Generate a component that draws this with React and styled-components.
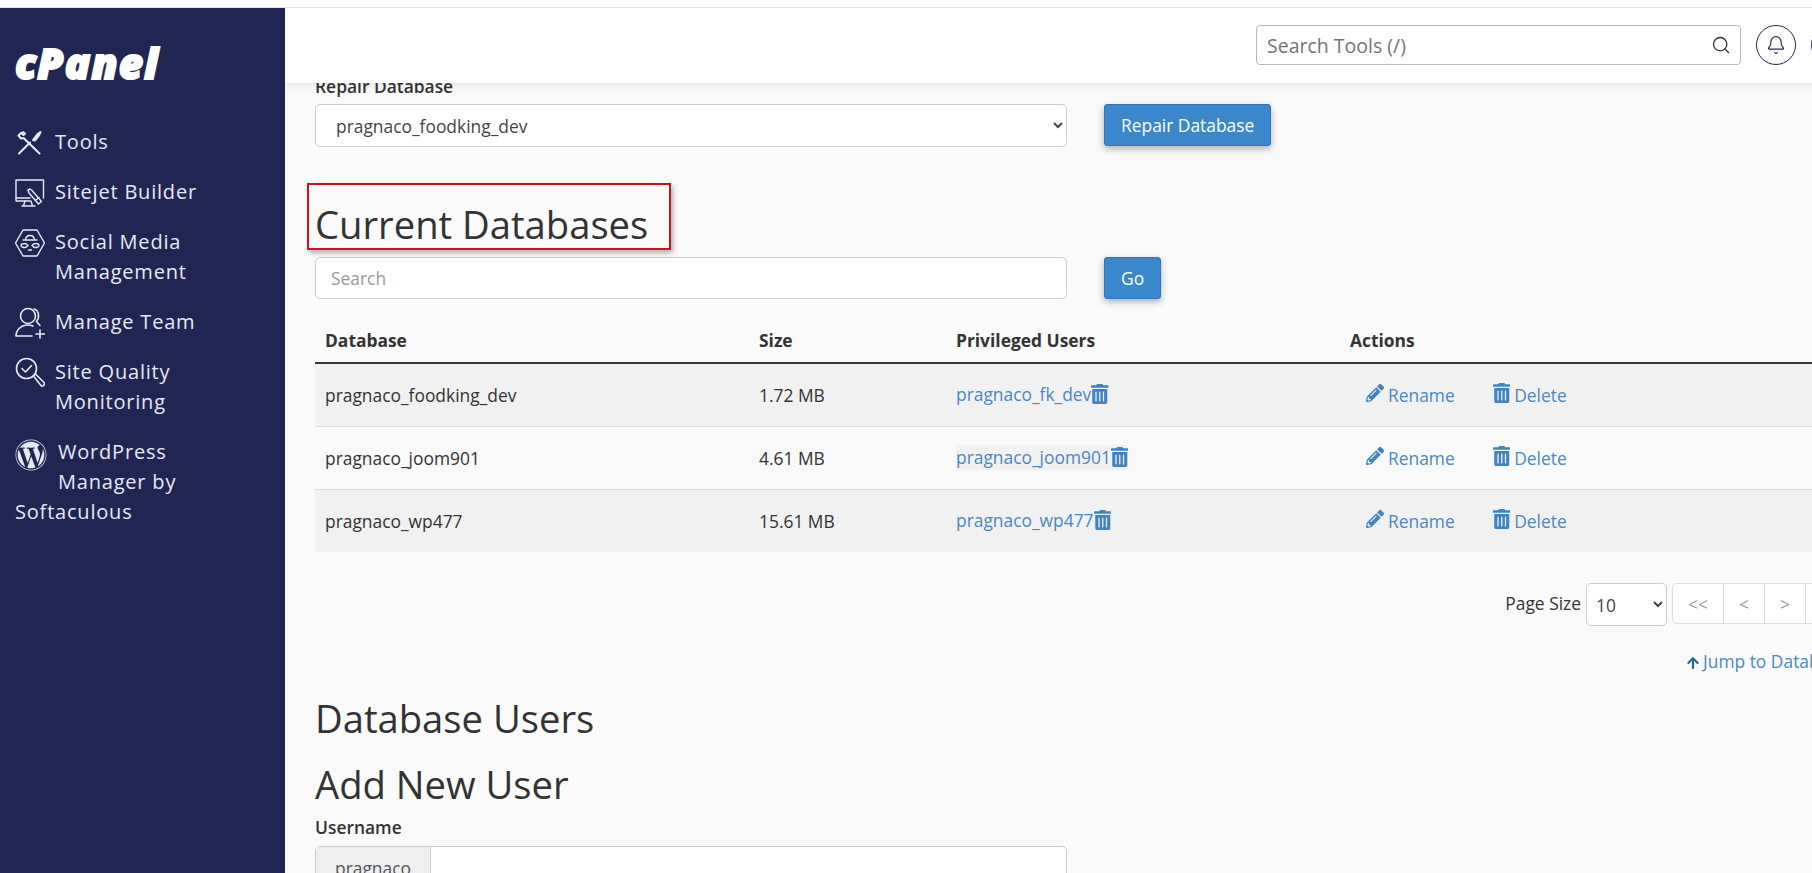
import React from 'react';
import styled, { createGlobalStyle } from 'styled-components';
import { Bell, Search } from 'lucide-react';
import { FaArrowUp, FaPencilAlt, FaTrashAlt, FaWordpress } from 'react-icons/fa';

const Global = createGlobalStyle`
  html, body { margin: 0; padding: 0; height: 100%; overflow: hidden; }
  body { font-family: "Open Sans", "Liberation Sans", sans-serif; color: #333; background: #fff; }
  * { box-sizing: border-box; }
`;

const Page = styled.div`
  height: 873px;
  display: flex;
  flex-direction: column;
  overflow: hidden;
`;

const TopStrip = styled.div`
  height: 8px;
  flex: none;
  background: #fff;
  border-bottom: 1px solid #e4e4e4;
`;

const Body = styled.div`
  flex: 1;
  min-height: 0;
  display: flex;
`;

const Sidebar = styled.aside`
  width: 285px;
  flex: none;
  padding: 33px 40px 0 15px;
  background: #202651;
  color: #e6e9f4;
`;

const Logo = styled.div`
  height: 86px;
  font-size: 42px;
  line-height: 44px;
  font-weight: 800;
  font-style: italic;
  letter-spacing: 1.2px;
  color: #fff;
  -webkit-text-stroke: 2px #fff;
`;

const Nav = styled.nav`
  display: flex;
  flex-direction: column;
  gap: 20px;
`;

const NavItem = styled.a`
  display: block;
  height: ${(p) => p.$lines * 30}px;
  font-size: 20px;
  line-height: 30px;
  letter-spacing: 0.8px;

  svg {
    float: left;
    width: ${(p) => p.$iconSize || 30}px;
    height: 32px;
    margin-right: ${(p) => p.$gap || 10}px;
    margin-top: ${(p) => p.$top || 0}px;
  }
`;

const Main = styled.div`
  flex: 1;
  min-width: 0;
  display: flex;
  flex-direction: column;
  background: #fafafa;
  overflow: hidden;
`;

const Header = styled.header`
  position: relative;
  z-index: 2;
  height: 75px;
  flex: none;
  display: flex;
  justify-content: flex-end;
  align-items: center;
  gap: 15px;
  margin-right: -39px;
  padding-bottom: 1px;
  background: #fff;
  box-shadow: 0 2px 8px rgba(0, 0, 0, 0.09);
`;

const ToolSearch = styled.div`
  width: 485px;
  height: 40px;
  display: flex;
  align-items: center;
  justify-content: space-between;
  padding: 0 9px 0 10px;
  background: #fff;
  border: 1px solid #b9b9c0;
  border-radius: 4px;
  font-size: 19.5px;
  color: #77736f;
`;

const RoundButton = styled.div`
  width: 40px;
  height: 40px;
  flex: none;
  display: flex;
  align-items: center;
  justify-content: center;
  border: 1px solid #202651;
  border-radius: 50%;
  color: #202651;
`;

const Content = styled.main`
  width: 1610px;
  padding: 0 0 0 30px;
  font-size: 17.4px;
`;

const FieldLabel = styled.label`
  display: block;
  line-height: 22px;
  font-weight: 600;
  margin-top: ${(p) => p.$top || 0}px;
  margin-bottom: ${(p) => p.$bottom || 7}px;
`;

const FormRow = styled.div`
  display: flex;
  gap: 37px;
  align-items: flex-start;
`;

const Select = styled.select`
  width: 752px;
  height: 43px;
  padding: 0 16px;
  background: #fff;
  border: 1px solid #ccc;
  border-radius: 5px;
  font: inherit;
  font-size: 17.4px;
  color: #444;
`;

const TextInput = styled.input`
  width: 752px;
  height: 42px;
  padding: 0 15px;
  background: #fff;
  border: 1px solid #ccc;
  border-radius: 5px;
  font: inherit;
  font-size: 17.4px;

  &::placeholder { color: #999; }
`;

const Button = styled.button`
  height: 42px;
  padding: 0 16px;
  background: #3a87cb;
  border: 1px solid #2f77b6;
  border-radius: 3px;
  box-shadow: 0 3px 7px rgba(0, 0, 0, 0.3);
  font: inherit;
  font-size: 17.4px;
  color: #fff;
`;

const Heading = styled.h2`
  margin: ${(p) => p.$top || 0}px 0 ${(p) => p.$bottom || 0}px;
  font-size: 38.2px;
  line-height: 46px;
  font-weight: 400;
  color: #333;
`;

const Marked = styled.span`
  position: relative;
  display: inline-block;

  &::after {
    content: '';
    position: absolute;
    left: -8px;
    right: -23px;
    top: -18px;
    bottom: -3px;
    border: 2px solid #c8141b;
    box-shadow: 2px 3px 5px rgba(0, 0, 0, 0.3);
  }
`;

const Table = styled.table`
  width: 1580px;
  margin-top: 19px;
  border-collapse: collapse;
  table-layout: fixed;
`;

const HeadCell = styled.th`
  height: 45px;
  padding: 0 10px;
  text-align: left;
  font-weight: 700;
  border-bottom: 2px solid #333;
`;

const Row = styled.tr`
  background: ${(p) => (p.$odd ? '#f1f1f1' : '#f9f9f9')};
  border-bottom: 1px solid #ddd;

  &:last-child { border-bottom: 0; }
`;

const Cell = styled.td`
  height: 63px;
  padding: 0 10px;
`;

const UserCell = styled.span`
  display: inline-block;
  background: ${(p) => (p.$hover ? '#f1f1f1' : 'transparent')};
  line-height: 25px;
`;

const Link = styled.a`
  color: #4b87c1;
`;

const TrashIcon = styled(FaTrashAlt)`
  width: 17.5px;
  height: 20px;
  color: #3f84c1;
  vertical-align: -3px;
`;

const Actions = styled.div`
  display: flex;
  gap: 38px;
  padding-left: 16px;
`;

const Action = styled.a`
  display: flex;
  align-items: center;
  gap: 4px;
  color: #4b87c1;

  svg { flex: none; color: #3f84c1; margin-top: -3px; }
`;

const PagerRow = styled.div`
  display: flex;
  justify-content: flex-end;
  align-items: flex-start;
  width: 1582px;
  margin-top: 31px;
`;

const PagerLabel = styled.span`
  line-height: 41px;
  margin-right: 5px;
`;

const SizeSelect = styled(Select)`
  width: 81px;
  height: 43px;
  padding: 0 5px;
  margin-right: 5px;
`;

const Pager = styled.div`
  display: flex;
  height: 41px;
  background: #fff;
  border: 1px solid #ddd;
  border-radius: 5px;
`;

const PageButton = styled.span`
  width: ${(p) => (p.$wide ? 50 : 41)}px;
  display: flex;
  align-items: center;
  justify-content: center;
  color: #999;
  border-left: ${(p) => (p.$first ? 0 : '1px solid #ddd')};
`;

const JumpRow = styled.div`
  display: flex;
  justify-content: flex-end;
  width: 1583px;
  margin-top: 24px;
  line-height: 22px;
`;

const JumpLink = styled.a`
  display: flex;
  align-items: center;
  gap: 4px;
  color: #4b87c1;

  svg { color: #1c6c82; width: 12px; height: 14px; margin-top: 3px; }
`;

const AddonGroup = styled.div`
  width: 752px;
  height: 44px;
  display: flex;
  background: #fff;
  border: 1px solid #ccc;
  border-radius: 5px;
`;

const Addon = styled.span`
  width: 115px;
  display: flex;
  align-items: center;
  justify-content: center;
  background: #eee;
  border-right: 1px solid #ccc;
  color: #555;
`;

const stroke = { fill: 'none', stroke: '#e6e9f4', strokeWidth: 1.7, strokeLinecap: 'round', strokeLinejoin: 'round' };

const ToolsIcon = () => (
  <svg viewBox="0 0 30 32" {...stroke} strokeWidth="2">
    <path d="M6 6 3.500 8.500 6 11.500l2.500-.5 16 15.500" />
    <path d="M6 6l2.500 2 1.500-1.500L8 5" />
    <path d="M4 26.500 15 15.500" />
    <path d="M18 13l4.500-6 3-2-1.500 3.500-4 5z" fill="#e6e9f4" />
  </svg>
);

const SitejetIcon = () => (
  <svg viewBox="0 0 30 32" {...stroke} strokeWidth="1.4">
    <path d="M15 24H1V3h27.500v18" />
    <path d="M1 21h14M7 29h13M10 24l-1.500 5M16 24l1.500 5" />
    <path d="M15 12l-2 1 1 3 9.500 11 3-2.500-9.500-11z" />
    <path d="M21 23l3-2.500" />
  </svg>
);

const SocialIcon = () => (
  <svg viewBox="0 0 30 32" {...stroke} strokeWidth="1.4">
    <path d="M8 3h14l7.500 13L22 29H8L.5 16z" />
    <path d="M10.500 13c.5-6 8.500-6 9 0M8 13h14" />
    <path d="M6 18.500c0-2 3-2 5-1.800l2 1.800-2 1.800c-2 .3-5 .2-5-1.800zM24 18.500c0-2-3-2-5-1.800l-2 1.800 2 1.800c2 .3 5 .2 5-1.800z" />
    <path d="M13.500 23h3" />
  </svg>
);

const TeamIcon = () => (
  <svg viewBox="0 0 30 32" {...stroke} strokeWidth="1.6">
    <circle cx="13" cy="9" r="7.500" />
    <path d="M19 2c5 1.500 6 8 2.500 12.500l3.500 4" />
    <path d="M1 29c0-6 5-11 12-11 2 0 3.500.5 5 1M1 29h16" />
    <path d="M25 23v8M21 27h8.500" />
  </svg>
);

const QualityIcon = () => (
  <svg viewBox="0 0 30 32" {...stroke} strokeWidth="1.6">
    <circle cx="11.500" cy="11.500" r="10" />
    <path d="M7 11.500l3.500 3.500 6-6.500" />
    <path d="M18.500 19l2-2 8.500 8.500c1 1 .5 2-.5 3s-2 1-3-.5z" />
  </svg>
);

const navItems = [
  { label: 'Tools', icon: <ToolsIcon />, lines: 1 },
  { label: 'Sitejet Builder', icon: <SitejetIcon />, lines: 1 },
  { label: 'Social Media Management', icon: <SocialIcon />, lines: 2 },
  { label: 'Manage Team', icon: <TeamIcon />, lines: 1 },
  { label: 'Site Quality Monitoring', icon: <QualityIcon />, lines: 2 },
  { label: 'WordPress Manager by Softaculous', icon: <FaWordpress />, lines: 3, iconSize: 32, gap: 11, top: 2 },
];

const databases = [
  { name: 'pragnaco_foodking_dev', size: '1.72 MB', user: 'pragnaco_fk_dev' },
  { name: 'pragnaco_joom901', size: '4.61 MB', user: 'pragnaco_joom901', hover: true },
  { name: 'pragnaco_wp477', size: '15.61 MB', user: 'pragnaco_wp477' },
];

export default function App() {
  return (
    <Page>
      <Global />
      <TopStrip />
      <Body>
        <Sidebar>
          <Logo>cPanel</Logo>
          <Nav>
            {navItems.map((item) => (
              <NavItem
                key={item.label}
                $lines={item.lines}
                $iconSize={item.iconSize}
                $gap={item.gap}
                $top={item.top}
              >
                {item.icon}
                {item.label}
              </NavItem>
            ))}
          </Nav>
        </Sidebar>
        <Main>
          <Header>
            <ToolSearch>
              Search Tools (/)
              <Search size={20} color="#2b2f3a" strokeWidth={1.6} />
            </ToolSearch>
            <RoundButton>
              <Bell size={20} strokeWidth={1.4} />
            </RoundButton>
            <RoundButton />
          </Header>
          <Content>
            <FieldLabel $top={-8}>Repair Database</FieldLabel>
            <FormRow>
              <Select defaultValue="pragnaco_foodking_dev">
                <option>pragnaco_foodking_dev</option>
              </Select>
              <Button>Repair Database</Button>
            </FormRow>
            <Heading $top={54} $bottom={10}>
              <Marked>Current Databases</Marked>
            </Heading>
            <FormRow>
              <TextInput placeholder="Search" />
              <Button>Go</Button>
            </FormRow>
            <Table>
              <colgroup>
                <col width="434" />
                <col width="197" />
                <col width="394" />
                <col />
              </colgroup>
              <thead>
                <tr>
                  <HeadCell>Database</HeadCell>
                  <HeadCell>Size</HeadCell>
                  <HeadCell>Privileged Users</HeadCell>
                  <HeadCell>Actions</HeadCell>
                </tr>
              </thead>
              <tbody>
                {databases.map((db, i) => (
                  <Row key={db.name} $odd={i % 2 === 0}>
                    <Cell>{db.name}</Cell>
                    <Cell>{db.size}</Cell>
                    <Cell>
                      <UserCell $hover={db.hover}>
                        <Link>{db.user}</Link>
                        <TrashIcon />
                      </UserCell>
                    </Cell>
                    <Cell>
                      <Actions>
                        <Action>
                          <FaPencilAlt size={18} />
                          Rename
                        </Action>
                        <Action>
                          <TrashIcon />
                          Delete
                        </Action>
                      </Actions>
                    </Cell>
                  </Row>
                ))}
              </tbody>
            </Table>
            <PagerRow>
              <PagerLabel>Page Size</PagerLabel>
              <SizeSelect defaultValue="10">
                <option>10</option>
              </SizeSelect>
              <Pager>
                <PageButton $first $wide>&lt;&lt;</PageButton>
                <PageButton>&lt;</PageButton>
                <PageButton>&gt;</PageButton>
                <PageButton>&gt;</PageButton>
                <PageButton $wide>&gt;&gt;</PageButton>
              </Pager>
            </PagerRow>
            <JumpRow>
              <JumpLink>
                <FaArrowUp />
                Jump to Database Users
              </JumpLink>
            </JumpRow>
            <Heading $top={23} $bottom={20}>Database Users</Heading>
            <Heading>Add New User</Heading>
            <FieldLabel $top={9} $bottom={8}>Username</FieldLabel>
            <AddonGroup>
              <Addon>pragnaco</Addon>
            </AddonGroup>
          </Content>
        </Main>
      </Body>
    </Page>
  );
}
